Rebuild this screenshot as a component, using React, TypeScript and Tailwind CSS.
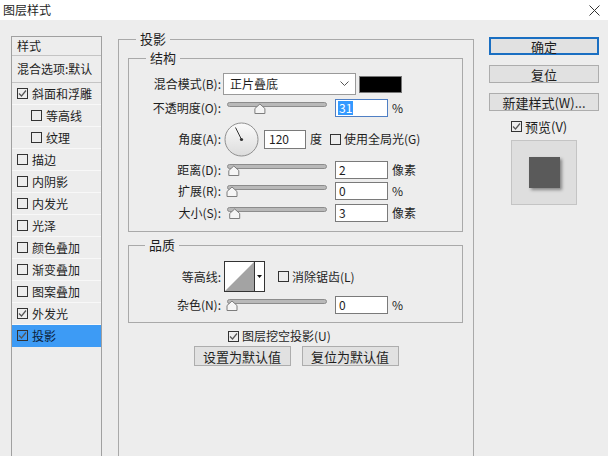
import type { ReactNode } from "react";

function Check({ on }: { on?: boolean }) {
  return (
    <span className="flex h-[11px] w-[11px] shrink-0 items-center justify-center border border-[#333]">
      {on && (
        <svg width="9" height="9" viewBox="0 0 9 9">
          <path d="M1 4.5 L3.5 7 L8 1.5" fill="none" stroke="#555" strokeWidth="1.2" />
        </svg>
      )}
    </span>
  );
}

function Slider({ v }: { v: number }) {
  const cx = 7 + v * 90;
  return (
    <svg width="104" height="18" viewBox="0 0 104 18" className="ml-[4px] shrink-0">
      <rect x="2.5" y="3.5" width="99" height="4" rx="2" fill="#b9b9b9" stroke="#8c8c8c" />
      <path
        d={`M${cx - 5} 14.5 V9.5 L${cx} 5 L${cx + 5} 9.5 V14.5 Z`}
        fill="#f5f5f5"
        stroke="#7d7d7d"
      />
    </svg>
  );
}

function Input({ value }: { value: string }) {
  return (
    <div className="ml-[6px] flex h-[18px] w-[53px] shrink-0 items-center border border-[#7a7a7a] bg-white pl-[3px] leading-none">
      {value}
    </div>
  );
}

function Row({ label, children, className = "" }: { label: string; children: ReactNode; className?: string }) {
  return (
    <div className={"flex items-center " + className}>
      <span className="w-[92px] shrink-0 text-right leading-none">{label}</span>
      {children}
    </div>
  );
}

function SideRow({ label, on, indent, active }: { label: string; on?: boolean; indent?: boolean; active?: boolean }) {
  return (
    <div
      className={
        "flex h-[22px] items-center border-b " +
        (active ? "border-[#3d9bf5] bg-[#3d9bf5] text-[#0b1d3a] " : "border-[#f8f8f8] ") +
        (indent ? "pl-[19px]" : "pl-[5px]")
      }
    >
      <Check on={on} />
      <span className="ml-[4px] leading-none">{label}</span>
    </div>
  );
}

export default function App() {
  return (
    <div className="h-[456px] w-[608px] overflow-hidden bg-[#ededed] font-['Noto_Sans_CJK_SC',sans-serif] text-[12px] text-[#1e1e1e]">
      {/* title bar */}
      <div className="flex h-[20px] items-center justify-between bg-white pl-[3px] pr-[8px]">
        <span className="text-[12px] leading-none">图层样式</span>
        <svg width="11" height="11" viewBox="0 0 11 11">
          <path d="M0.5 0.5 L10.5 10.5 M10.5 0.5 L0.5 10.5" stroke="#333" strokeWidth="1" />
        </svg>
      </div>

      <div className="flex items-start">
        {/* left style list */}
        <div className="ml-[11px] mt-[16px] h-[430px] w-[91px] shrink-0 border border-[#a0a0a0]">
          <div className="flex h-[19px] items-center border-b border-[#c4c4c4] pl-[5px] leading-none">样式</div>
          <div className="flex h-[27px] items-center border-b border-[#c4c4c4] pl-[5px] leading-none">混合选项:默认</div>
          <SideRow label="斜面和浮雕" on />
          <SideRow label="等高线" indent />
          <SideRow label="纹理" indent />
          <SideRow label="描边" />
          <SideRow label="内阴影" />
          <SideRow label="内发光" />
          <SideRow label="光泽" />
          <SideRow label="颜色叠加" />
          <SideRow label="渐变叠加" />
          <SideRow label="图案叠加" />
          <SideRow label="外发光" on />
          <SideRow label="投影" on active />
        </div>

        {/* main panel */}
        <fieldset className="ml-[16px] mt-[11px] h-[440px] w-[356px] shrink-0 border border-[#a9a9a9]">
          <legend className="ml-[17px] px-[4px] text-[13px] leading-[16px]">投影</legend>

          <fieldset className="ml-[9px] mt-[3px] w-[335px] border border-[#a9a9a9] pb-[9px] pt-[7px]">
            <legend className="ml-[17px] px-[4px] text-[13px] leading-[16px]">结构</legend>

            <Row label="混合模式(B):">
              <div className="ml-[2px] flex h-[22px] w-[133px] items-center justify-between border border-[#9a9a9a] bg-white pl-[6px] pr-[6px] leading-none">
                <span>正片叠底</span>
                <svg width="9" height="6" viewBox="0 0 9 6">
                  <path d="M0.5 0.5 L4.5 4.5 L8.5 0.5" fill="none" stroke="#555" />
                </svg>
              </div>
              <div className="ml-[3px] h-[17px] w-[43px] border border-[#777] bg-black" />
            </Row>

            <Row label="不透明度(O):" className="mt-[4px] h-[18px]">
              <Slider v={0.31} />
              <div className="ml-[6px] flex h-[18px] w-[53px] shrink-0 items-center border border-[#4f7fc4] bg-white pl-[2px] leading-none">
                <span className="bg-[#3399ff] px-[1px] py-[1px] text-white">31</span>
              </div>
              <span className="ml-[4px] leading-none">%</span>
            </Row>

            <Row label="角度(A):" className="mt-[5px] h-[34px]">
              <svg width="35" height="35" viewBox="0 0 35 35" className="ml-[3px] shrink-0">
                <defs>
                  <linearGradient id="dial" x1="0" y1="0" x2="0" y2="1">
                    <stop offset="0" stopColor="#fbfbfb" />
                    <stop offset="1" stopColor="#dcdcdc" />
                  </linearGradient>
                </defs>
                <circle cx="17.5" cy="17.5" r="16.5" fill="url(#dial)" stroke="#8f8f8f" />
                <path d="M17.5 17.5 L11.5 5.5" stroke="#333" strokeWidth="1" />
                <circle cx="17.5" cy="17.5" r="1.6" fill="#333" />
              </svg>
              <div className="ml-[5px] flex h-[19px] w-[42px] shrink-0 items-center border border-[#7a7a7a] bg-white pl-[4px] leading-none">
                120
              </div>
              <span className="ml-[4px] leading-none">度</span>
              <span className="ml-[8px]">
                <Check />
              </span>
              <span className="ml-[3px] leading-none">使用全局光(G)</span>
            </Row>

            <Row label="距离(D):" className="mt-[5px] h-[18px]">
              <Slider v={0.02} />
              <Input value="2" />
              <span className="ml-[4px] leading-none">像素</span>
            </Row>
            <Row label="扩展(R):" className="mt-[3px] h-[18px]">
              <Slider v={0} />
              <Input value="0" />
              <span className="ml-[4px] leading-none">%</span>
            </Row>
            <Row label="大小(S):" className="mt-[4px] h-[18px]">
              <Slider v={0.03} />
              <Input value="3" />
              <span className="ml-[4px] leading-none">像素</span>
            </Row>
          </fieldset>

          <fieldset className="ml-[9px] mt-[5px] w-[335px] border border-[#a9a9a9] pb-[8px] pt-[8px]">
            <legend className="ml-[16px] px-[4px] text-[13px] leading-[16px]">品质</legend>

            <Row label="等高线:" className="h-[31px]">
              <div className="ml-[3px] flex h-[31px] w-[41px] shrink-0 border border-[#333] bg-white">
                <svg width="29" height="29" viewBox="0 0 29 29" className="shrink-0">
                  <polygon points="0,29 29,0 29,29" fill="#a3a3a3" />
                </svg>
                <div className="flex flex-1 items-center justify-center border-l border-[#333]">
                  <svg width="5" height="3" viewBox="0 0 5 3">
                    <polygon points="0,0 5,0 2.5,3" fill="#111" />
                  </svg>
                </div>
              </div>
              <span className="ml-[13px]">
                <Check />
              </span>
              <span className="ml-[3px] leading-none">消除锯齿(L)</span>
            </Row>

            <Row label="杂色(N):" className="mt-[4px] h-[18px]">
              <Slider v={0} />
              <Input value="0" />
              <span className="ml-[4px] leading-none">%</span>
            </Row>
          </fieldset>

          <div className="mt-[5px] flex h-[16px] items-center pl-[109px]">
            <Check on />
            <span className="ml-[3px] leading-none">图层挖空投影(U)</span>
          </div>

          <div className="mt-[2px] flex justify-center gap-[11px]">
            <div className="flex h-[20px] w-[97px] items-center justify-center border border-[#adadad] bg-[#e1e1e1] text-[13px] leading-none">
              设置为默认值
            </div>
            <div className="flex h-[20px] w-[97px] items-center justify-center border border-[#adadad] bg-[#e1e1e1] text-[13px] leading-none">
              复位为默认值
            </div>
          </div>
        </fieldset>

        {/* right column */}
        <div className="ml-[15px] mt-[17px] w-[110px] shrink-0 text-[13px]">
          <div className="flex h-[18px] items-center justify-center border-2 border-[#1a6fc2] bg-[#e1e1e1] leading-none">
            确定
          </div>
          <div className="mt-[10px] flex h-[18px] items-center justify-center border border-[#adadad] bg-[#e1e1e1] leading-none">
            复位
          </div>
          <div className="mt-[10px] flex h-[18px] items-center justify-center border border-[#adadad] bg-[#e1e1e1] leading-none">
            新建样式(W)...
          </div>
          <div className="mt-[8px] flex h-[14px] items-center pl-[22px]">
            <Check on />
            <span className="ml-[3px] leading-none">预览(V)</span>
          </div>
          <div className="ml-[22px] mt-[7px] flex h-[65px] w-[66px] items-center justify-center border border-[#c4c4c4] bg-[#dedede]">
            <div className="h-[31px] w-[31px] bg-[#5a5a5a] shadow-[2px_2px_3px_rgba(0,0,0,0.4)]" />
          </div>
        </div>
      </div>
    </div>
  );
}
